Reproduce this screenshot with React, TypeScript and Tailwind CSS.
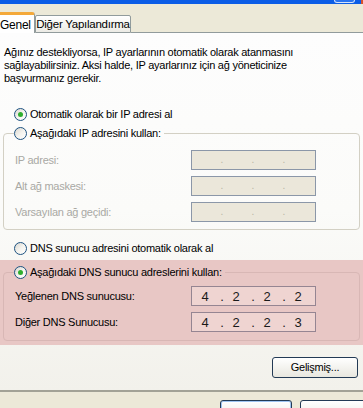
import React from "react";

type IpProps = {
  parts?: string[];
  tinted?: boolean;
};

function IpBox({ parts, tinted = false }: IpProps) {
  const cells = parts ?? ["", "", "", ""];
  return (
    <div
      className={
        tinted
          ? "flex h-[20px] w-[125px] items-center border border-[#958592] bg-[#efd4d1] pl-[9px] text-[13px] tracking-normal text-[#1a1a1a]"
          : "flex h-[20px] w-[125px] items-center border border-[#8b97a8] bg-[#ebe7da] pl-[9px] text-[10px] tracking-normal text-[#b9b5a6]"
      }
    >
      {cells.map((c, i) => (
        <React.Fragment key={i}>
          <span className="w-[8px] text-center leading-none">{c}</span>
          {i < 3 && <span className="ml-[11px] mr-[8px] w-[4px] text-center leading-none">.</span>}
        </React.Fragment>
      ))}
    </div>
  );
}

function Radio({ checked = false }: { checked?: boolean }) {
  return (
    <span className="flex h-[13px] w-[13px] shrink-0 items-center justify-center rounded-full border border-[#1d5281] bg-gradient-to-br from-[#d8d6cf] via-[#f4f3ee] to-white">
      {checked && <span className="h-[5px] w-[5px] rounded-full bg-[#2fae2f]" />}
    </span>
  );
}

function Field({ label, disabled, parts }: { label: string; disabled?: boolean; parts?: string[] }) {
  return (
    <div className="flex h-[20px] items-center">
      <span className={`w-[187px] pl-[11px] ${disabled ? "text-[#a9a9a4]" : "text-black"}`}>{label}</span>
      <IpBox parts={parts} tinted={!disabled} />
    </div>
  );
}

export default function App() {
  return (
    <div className="flex h-[408px] w-[363px] flex-col overflow-hidden bg-[#ece9d8] font-['Liberation_Sans',Arial,sans-serif] text-[11px] tracking-[-0.25px] text-black">
      {/* title bar edge */}
      <div className="flex h-[4px] shrink-0 justify-end bg-[#0b5de6]">
        <div className="mr-[6px] h-[3px] w-[21px] rounded-b-[3px] border-x border-b border-white/80 bg-[#2a74f0]" />
        <div className="h-[4px] w-[2px] bg-[#d8502a]" />
      </div>

      {/* tabs */}
      <div className="flex h-[29px] shrink-0 items-end">
        <div className="ml-[-9px] flex h-[21px] w-[44px] items-center rounded-t-[3px] border-x border-t-[3px] border-x-[#919b9c] border-t-[#f4a93a] bg-white pl-[8px] pt-[1px] text-[12px]">
          Genel
        </div>
        <div className="flex h-[18px] w-[96px] items-center justify-center whitespace-nowrap rounded-t-[2px] border border-[#919b9c] bg-gradient-to-b from-white to-[#ecebe5] pt-[1px] text-[11.5px]">
          Diğer Yapılandırma
        </div>
        <div className="h-[1px] flex-1 bg-[#919b9c]" />
      </div>

      {/* panel */}
      <div className="flex h-[357px] shrink-0 flex-col bg-gradient-to-b from-[#fdfdfd] via-[#fbfbf9] to-[#f2f1eb]">
        <p className="pl-[4px] pt-[13px] text-[11px] leading-[13px]">
          Ağınız destekliyorsa, IP ayarlarının otomatik olarak atanmasını
          <br />
          sağlayabilirsiniz. Aksi halde, IP ayarlarınız için ağ yöneticinize
          <br />
          başvurmanız gerekir.
        </p>

        <label className="ml-[14px] mt-[21px] flex h-[16px] items-center gap-[3px]">
          <Radio checked />
          <span>Otomatik olarak bir IP adresi al</span>
        </label>

        <fieldset className="ml-[3px] mt-[3px] w-[357px] rounded-[4px] border border-[#d3d0c4] pb-[7px]">
          <legend className="ml-[10px] flex h-[16px] items-center gap-[3px] pr-[3px]">
            <Radio />
            <span>Aşağıdaki IP adresini kullan:</span>
          </legend>
          <div className="mt-[9px] flex flex-col gap-[6px]">
            <Field label="IP adresi:" disabled />
            <Field label="Alt ağ maskesi:" disabled />
            <Field label="Varsayılan ağ geçidi:" disabled />
          </div>
        </fieldset>

        <label className="ml-[14px] mt-[10px] flex h-[16px] items-center gap-[3px]">
          <Radio />
          <span>DNS sunucu adresini otomatik olarak al</span>
        </label>

        <div className="mt-[4px] bg-[#e8c7c5] pb-[4px] pt-[4px]">
          <fieldset className="ml-[3px] w-[357px] rounded-[4px] border border-[#d8b7b5] pb-[8px]">
            <legend className="ml-[10px] flex h-[16px] items-center gap-[3px] pr-[3px]">
              <Radio checked />
              <span>Aşağıdaki DNS sunucu adreslerini kullan:</span>
            </legend>
            <div className="mt-[6px] flex flex-col gap-[6px]">
              <Field label="Yeğlenen DNS sunucusu:" parts={["4", "2", "2", "2"]} />
              <Field label="Diğer DNS Sunucusu:" parts={["4", "2", "2", "3"]} />
            </div>
          </fieldset>
        </div>

        <div className="mr-[5px] mt-[12px] flex justify-end">
          <button className="h-[21px] w-[86px] rounded-[3px] border border-[#233a55] bg-gradient-to-b from-white to-[#e8e7df] text-[11px]">
            Gelişmiş...
          </button>
        </div>
      </div>

      {/* bottom bar */}
      <div className="flex min-h-0 flex-1 gap-[8px] overflow-hidden border-t-2 border-t-[#a2a296] pl-[220px] pt-[8px]">
        <button className="h-[23px] w-[72px] shrink-0 rounded-[3px] border border-[#233a55] bg-gradient-to-b from-white to-[#e8e7df] pt-[4px] text-[11px] leading-[14px] shadow-[inset_0_0_0_1px_#9ec4f2]">
          Tamam
        </button>
        <button className="h-[23px] w-[72px] shrink-0 rounded-[3px] border border-[#233a55] bg-gradient-to-b from-white to-[#e8e7df] pt-[4px] text-[11px] leading-[14px]">
          İptal
        </button>
      </div>
    </div>
  );
}
